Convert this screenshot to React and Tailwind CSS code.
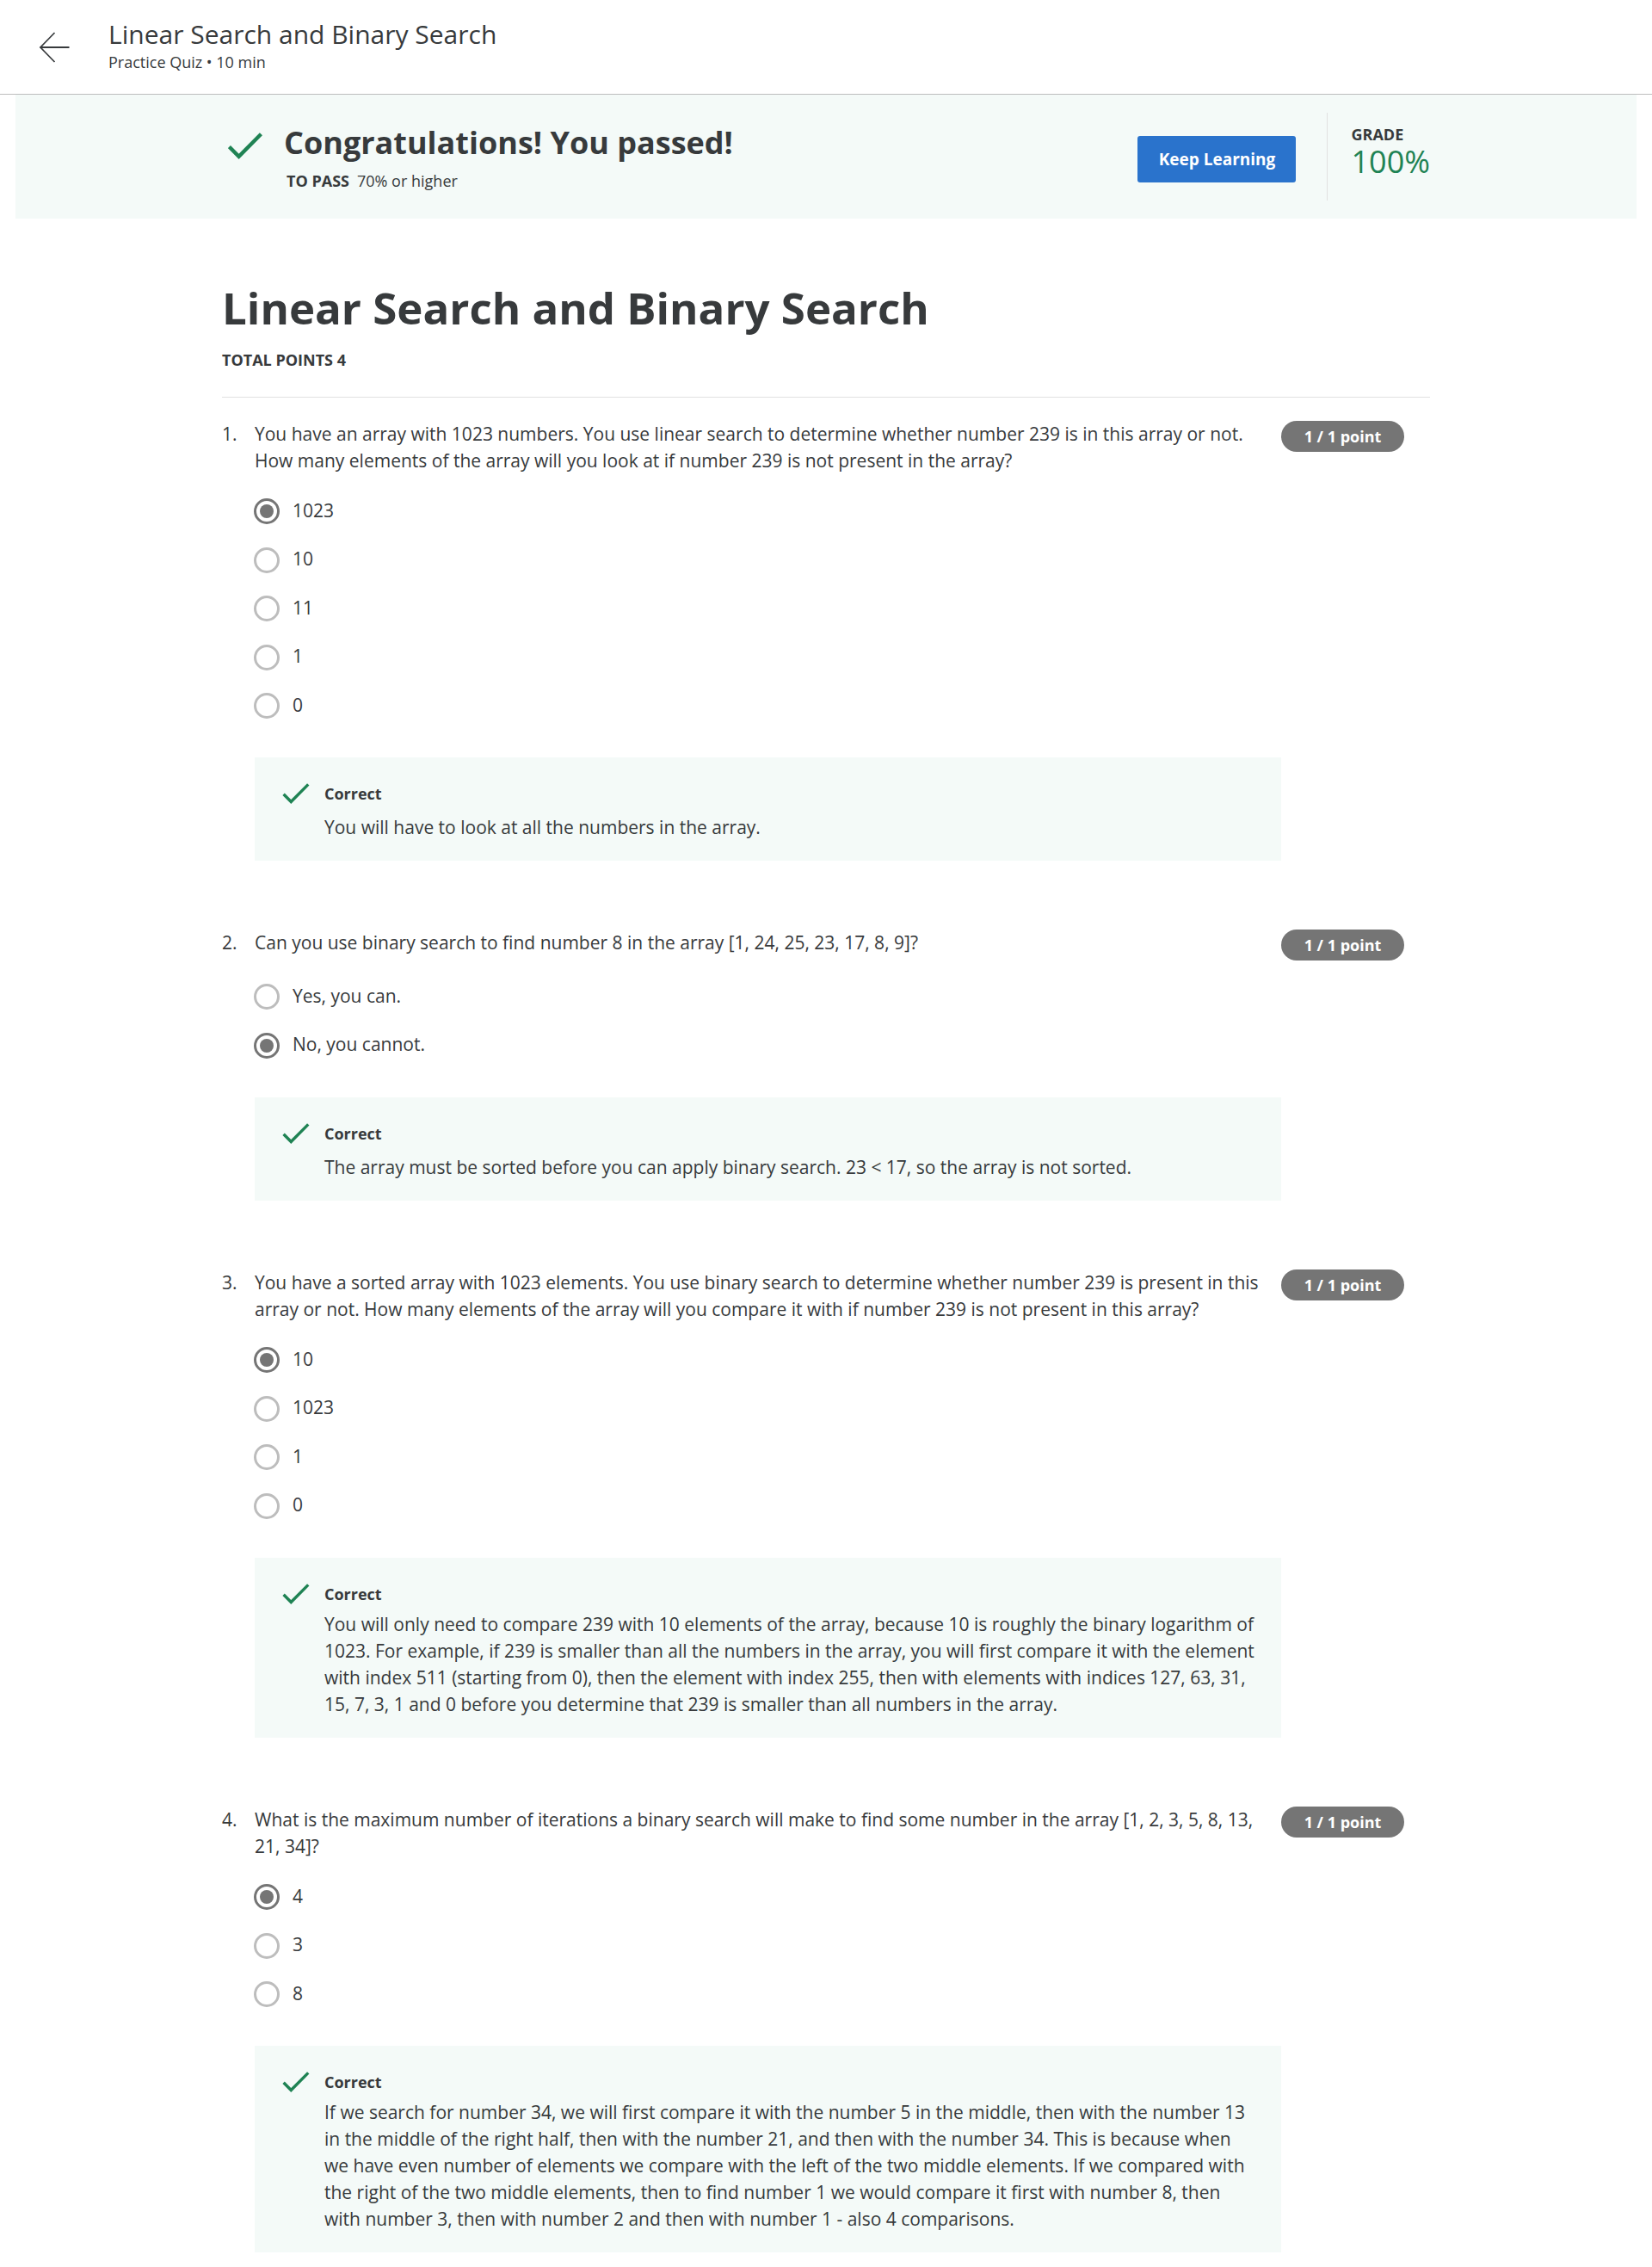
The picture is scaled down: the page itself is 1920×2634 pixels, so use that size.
const quiz = [
  {
    text: "You have an array with 1023 numbers. You use linear search to determine whether number 239 is in this array or not. How many elements of the array will you look at if number 239 is not present in the array?",
    options: ["1023", "10", "11", "1", "0"],
    selected: 0,
    feedback: "You will have to look at all the numbers in the array.",
  },
  {
    text: "Can you use binary search to find number 8 in the array [1, 24, 25, 23, 17, 8, 9]?",
    options: ["Yes, you can.", "No, you cannot."],
    selected: 1,
    feedback:
      "The array must be sorted before you can apply binary search. 23 < 17, so the array is not sorted.",
  },
  {
    text: "You have a sorted array with 1023 elements. You use binary search to determine whether number 239 is present in this array or not. How many elements of the array will you compare it with if number 239 is not present in this array?",
    options: ["10", "1023", "1", "0"],
    selected: 0,
    feedback:
      "You will only need to compare 239 with 10 elements of the array, because 10 is roughly the binary logarithm of 1023. For example, if 239 is smaller than all the numbers in the array, you will first compare it with the element with index 511 (starting from 0), then the element with index 255, then with elements with indices 127, 63, 31, 15, 7, 3, 1 and 0 before you determine that 239 is smaller than all numbers in the array.",
  },
  {
    text: "What is the maximum number of iterations a binary search will make to find some number in the array [1, 2, 3, 5, 8, 13, 21, 34]?",
    options: ["4", "3", "8"],
    selected: 0,
    feedback:
      "If we search for number 34, we will first compare it with the number 5 in the middle, then with the number 13 in the middle of the right half, then with the number 21, and then with the number 34. This is because when we have even number of elements we compare with the left of the two middle elements. If we compared with the right of the two middle elements, then to find number 1 we would compare it first with number 8, then with number 3, then with number 2 and then with number 1 - also 4 comparisons.",
  },
];

function BackArrow() {
  return (
    <svg width="36" height="38" viewBox="0 0 36 38" fill="none" stroke="#373a3c" aria-hidden="true">
      <path d="M1.5 19H35.5" strokeWidth="2" />
      <path d="M18.5 2L2 19L18.5 36" strokeWidth="1.7" />
    </svg>
  );
}

function Check({ className, strokeWidth }) {
  return (
    <svg
      className={className}
      viewBox="0 0 40 31"
      fill="none"
      stroke="#1f8354"
      strokeWidth={strokeWidth}
      aria-hidden="true"
    >
      <path d="M1.4 16.5L12.6 27.8L38.4 1.8" />
    </svg>
  );
}

function Option({ name, label, checked }) {
  return (
    <label className="flex h-14 items-center even:h-[57px]">
      <span className="-ml-px grid size-[30px] shrink-0 place-items-center">
        <input
          type="radio"
          name={name}
          defaultChecked={checked}
          className="peer col-start-1 row-start-1 size-[30px] appearance-none rounded-full border-3 border-[#bdbdbd] checked:border-[#757575]"
        />
        <span className="col-start-1 row-start-1 hidden size-4 rounded-full bg-[#757575] peer-checked:block" />
      </span>
      <span className="ml-[15px] pb-0.5 text-[21px] leading-[31px]">{label}</span>
    </label>
  );
}

function Question({ number, question }) {
  return (
    <li className="flex">
      <span className="w-[38px] shrink-0 pt-px text-[21px] leading-[31px]">{number}.</span>
      <div className="min-w-0 flex-1">
        <p className="min-h-9 pt-px pr-6 text-[21px] leading-[31px]">{question.text}</p>
        <div className="mt-[15px]" role="radiogroup" aria-label={`Question ${number}`}>
          {question.options.map((label, i) => (
            <Option key={label} name={`q${number}`} label={label} checked={i === question.selected} />
          ))}
        </div>
        <div className="mt-8 flex bg-[#f4faf8] pt-[30px] pr-7 pb-[23px]">
          <Check className="ml-8 h-6 w-8 shrink-0" strokeWidth={4.4} />
          <div className="ml-[17px]">
            <h3 className="text-lg leading-6 font-bold">Correct</h3>
            <p className="mt-2 flex min-h-[35px] items-end text-[21px] leading-[31px]">
              {question.feedback}
            </p>
          </div>
        </div>
      </div>
      <div className="w-[173px] shrink-0">
        <span className="mt-px flex h-9 w-[143px] items-center justify-center rounded-full bg-[#757575] text-lg font-bold text-white">
          1 / 1 point
        </span>
      </div>
    </li>
  );
}

export default function App() {
  return (
    <div className="bg-white pb-4 font-['Open_Sans',sans-serif] text-[#373a3c]">
      <header className="flex h-[110px] items-center border-b border-[#bdbdbd] pl-[45px]">
        <a href="#back" aria-label="Back">
          <BackArrow />
        </a>
        <div className="ml-[45px] pb-1.5">
          <div className="text-[30px] leading-10">Linear Search and Binary Search</div>
          <div className="text-lg leading-6">Practice Quiz • 10 min</div>
        </div>
      </header>

      <section className="mx-[18px] h-36 bg-[#f4faf8]">
        <div className="mx-auto flex h-full max-w-[1404px]">
          <Check className="mt-[44px] ml-[7px] h-[31px] w-10" strokeWidth={4.4} />
          <div className="mt-8 ml-[25px] flex-1">
            <h2 className="text-[36px] leading-[48px] font-bold">Congratulations! You passed!</h2>
            <p className="mt-2 ml-[3px] flex gap-[9px] text-lg leading-6">
              <span className="font-bold">TO PASS</span>
              <span>70% or higher</span>
            </p>
          </div>
          <button
            type="button"
            className="mt-12 h-[54px] w-[184px] rounded-[3px] bg-[#2a73cc] text-[19px] font-bold text-white"
          >
            Keep Learning
          </button>
          <div className="mt-[21px] ml-9 h-[102px] border-l border-[#e1e1e1] pt-[13px] pl-[27px]">
            <div className="text-lg leading-6 font-bold">GRADE</div>
            <div className="text-[36px] leading-10 text-[#1f8354]">100%</div>
          </div>
        </div>
      </section>

      <main className="mx-auto max-w-[1404px] pt-[69px]">
        <h1 className="text-[51px] leading-[68px] font-bold">Linear Search and Binary Search</h1>
        <p className="mt-[15px] text-lg leading-6 font-bold">TOTAL POINTS 4</p>
        <hr className="mt-[31px] border-[#e1e1e1]" />
        <ol className="mt-[26px] flex flex-col gap-[79px]">
          {quiz.map((question, i) => (
            <Question key={i} number={i + 1} question={question} />
          ))}
        </ol>
      </main>
    </div>
  );
}
